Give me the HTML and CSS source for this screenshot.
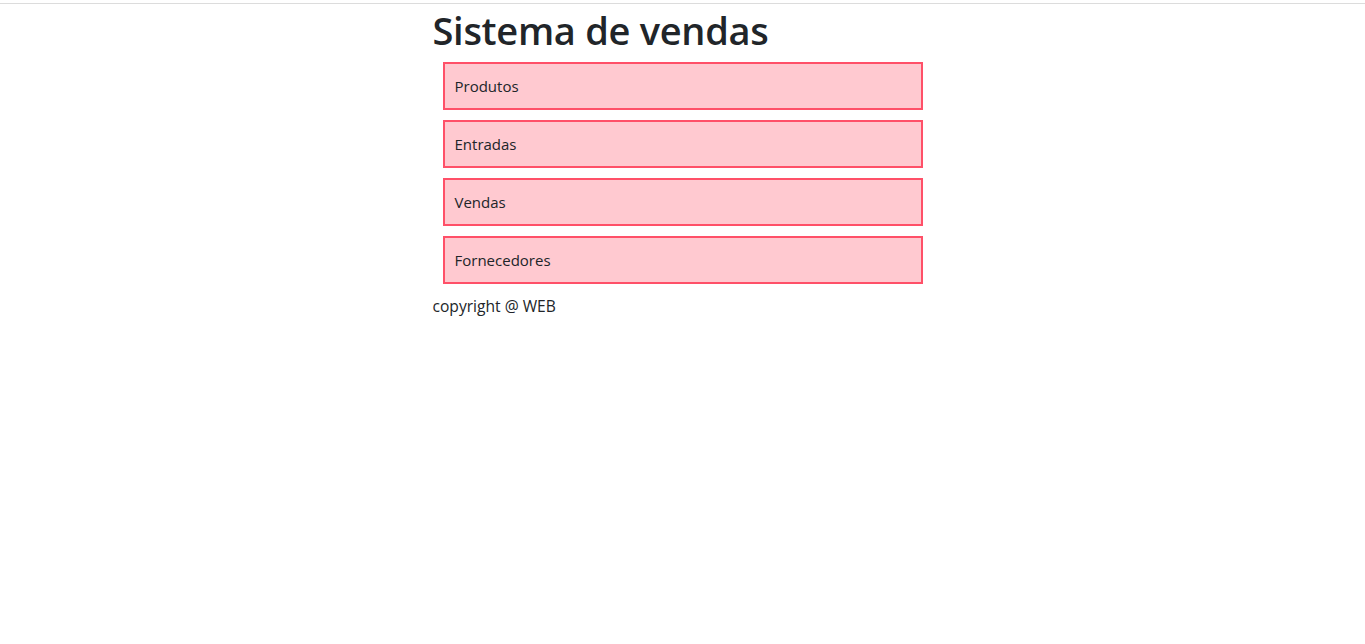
FILE: index.html
```html
<!DOCTYPE html>
<html lang="pt">
<head>
<meta charset="utf-8">
<title>Sistema de vendas</title>
<link rel="stylesheet" href="styles.css">
</head>
<body>
<header class="topbar"></header>
<main class="container">
  <h1 class="title">Sistema de vendas</h1>
  <nav class="menu">
    <a class="menu-item" href="#">Produtos</a>
    <a class="menu-item" href="#">Entradas</a>
    <a class="menu-item" href="#">Vendas</a>
    <a class="menu-item" href="#">Fornecedores</a>
  </nav>
  <footer class="footer">copyright @ WEB</footer>
</main>
</body>
</html>
```
FILE: styles.css
```css
html, body {
  margin: 0;
  padding: 0;
  background: #fff;
}
body {
  font-family: "Open Sans", "Noto Sans", sans-serif;
  font-size: 16px;
  line-height: 1.5;
  color: #212529;
}
.topbar {
  height: 3px;
  border-bottom: 1px solid #dcdcdc;
}
.container {
  width: 500px;
  margin: 0 auto;
}
.title {
  margin: 0 0 10px;
  padding-top: 2px;
  height: 46px;
  font-size: 38px;
  font-weight: 600;
  line-height: 48px;
  letter-spacing: -0.3px;
}
.menu {
  display: flex;
  flex-direction: column;
  gap: 10px;
  margin: 0 10px;
}
.menu-item {
  display: block;
  height: 44px;
  line-height: 44px;
  padding: 0 10px;
  border: 2px solid #ff5068;
  background: #ffc9d0;
  color: #212529;
  text-decoration: none;
  font-size: 15px;
}
.footer {
  margin-top: 10px;
  font-size: 15.6px;
  line-height: 24px;
}
```
